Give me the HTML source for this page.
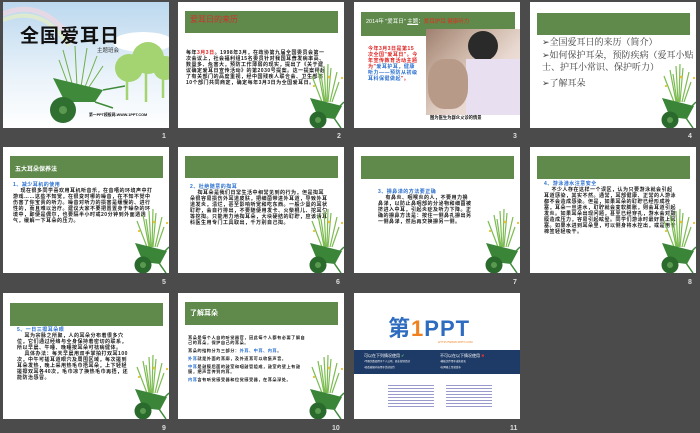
<!DOCTYPE html><html><head><meta charset="utf-8"><style>
*{margin:0;padding:0;box-sizing:border-box}
body{width:700px;height:433px;background:#4b4b4b;position:relative;overflow:hidden;font-family:"Liberation Sans","Noto Sans CJK SC",sans-serif}
.s{position:absolute;width:166px;height:126px;background:#fff;overflow:hidden}
.h{position:absolute;left:7px;top:9px;width:153px;height:23px;background:#5f8a4b}
.n{position:absolute;color:#ddd;font-size:7px;font-weight:bold}
.t{position:absolute;font-size:5px;line-height:6px;color:#1a1a1a;font-weight:bold;letter-spacing:.5px}
.b{color:#2a6fd0}
.wb{position:absolute;right:0;bottom:0}
</style></head><body>
<svg width="0" height="0" style="position:absolute"><defs>
<g id="w"><g stroke="#7cbc52" stroke-width="1.2" fill="none"><path d="M20 40 L14 8 M22 40 L20 4 M24 40 L27 6 M26 40 L33 10 M18 40 L8 14 M28 40 L35 20 M23 40 L24 2 M21 40 L17 12"/></g>
<path d="M6 36 L38 44 L31 57 L14 55 Z" fill="#3a8538"/><circle cx="14" cy="58" r="8.5" fill="#2a6a2c"/><circle cx="14" cy="58" r="3" fill="#5a9a50"/><path d="M30 56 L37 66 M36 44 L40 40" stroke="#3f8a3a" stroke-width="1.5"/><circle cx="25" cy="15" r="1.3" fill="#e8c030"/><circle cx="10" cy="24" r="1.1" fill="#e8c030"/><circle cx="38" cy="16" r="1.1" fill="#e8c030"/></g></defs></svg>

<!-- slide 1 -->
<div class="s" style="left:3px;top:2px;background:linear-gradient(#bcd8ee,#eaf3fa 60%,#fff)">
<svg width="166" height="126" style="position:absolute;left:0;top:0">
<path d="M0 12 Q40 -5 70 40" stroke="#f4d7e0" stroke-width="5" fill="none" opacity=".7"/>
<path d="M0 18 Q40 2 66 44" stroke="#e8f0c0" stroke-width="4" fill="none" opacity=".7"/>
<ellipse cx="140" cy="40" rx="30" ry="10" fill="#fff"/>
<g fill="#a4d472"><circle cx="126" cy="66" r="14"/><circle cx="145" cy="56" r="16"/><circle cx="162" cy="66" r="12"/></g>
<g stroke="#a4d472" stroke-width="2.5"><path d="M124 75V98M143 70V100M160 75V96"/></g>
<g stroke="#6fb04a" stroke-width="1" fill="none"><path d="M70 85 L60 48 M74 85 L72 44 M78 85 L84 46 M82 85 L94 54 M66 85 L56 58 M86 85 L100 64"/></g>
<path d="M50 76 L100 88 L92 100 L62 100 Z" fill="#3f8a3a"/>
<path d="M100 88 L122 84 M92 100 L110 106" stroke="#3f8a3a" stroke-width="1.5"/>
<circle cx="60" cy="108" r="13" fill="#2f7030"/><circle cx="60" cy="108" r="4" fill="#5a9a50"/>
</svg>
<div style="position:absolute;left:17px;top:19px;font-size:19px;font-weight:bold;color:#111;letter-spacing:1px">全国爱耳日</div>
<div style="position:absolute;left:94px;top:44px;font-size:5.5px;color:#333">主题班会</div>
<div style="position:absolute;left:86px;top:111px;font-size:3.8px;color:#111;font-weight:bold">第一PPT模板网-WWW.1PPT.COM</div>
</div>
<div class="n" style="left:162px;top:133px">1</div>

<!-- slide 2 -->
<div class="s" style="left:178px;top:2px">
<div class="h" style="height:22px"></div>
<div style="position:absolute;left:12px;top:12px;font-size:8px;color:#d0302a">爱耳日的来历</div>
<div class="t" style="left:8px;top:48px;width:140px">每年<span style="color:#e02020">3月3日</span>。1998年3月，在政协第九届全国委员会第一次会议上，社会福利组15名委员针对我国耳聋发病率高、数量多、危害大，预防工作薄弱的现实，提出了《关于建议确定爱耳日宣传活动》的第2030号提案。这一提案得起了有关部门的高度重视，经中国残疾人联合会、卫生部等10个部门共同商定，确定每年3月3日为全国爱耳日。</div>
<svg class="wb" width="40" height="66"><use href="#w"/></svg>
</div>
<div class="n" style="left:337px;top:133px">2</div>

<!-- slide 3 -->
<div class="s" style="left:354px;top:2px">
<div class="h" style="left:7px;top:10px;width:154px;height:24px"></div>
<div style="position:absolute;left:12px;top:15px;font-size:5.5px;color:#fff">2014年 "爱耳日" <u>主题</u>：<span style="color:#e03020">爱耳护耳 健康听力</span></div>
<div class="t" style="left:14px;top:44px;width:50px;color:#e02020;line-height:6px">今年3月3日是第15次全国"爱耳日"。今年宣传教育活动主题为"<span class="b">爱耳护耳，健康听力——预防从初级耳科保健做起</span>"。</div>
<div style="position:absolute;left:72px;top:27px;width:95px;height:86px;background:linear-gradient(135deg,#a08070,#c8b0a0 30%,#e8d8d0 60%,#f4eaea)">
<div style="position:absolute;left:42px;top:2px;width:30px;height:30px;border-radius:50%;background:#2a2a2a"></div>
<div style="position:absolute;left:40px;top:30px;width:55px;height:56px;background:#e8e0f0"></div>
<div style="position:absolute;left:2px;top:30px;width:40px;height:50px;border-radius:40%;background:#b89a88"></div></div>
<div style="position:absolute;left:76px;top:113px;font-size:4.3px;font-weight:bold;color:#111">图为医生为群众义诊的情景</div>
</div>
<div class="n" style="left:513px;top:133px">3</div>

<!-- slide 4 -->
<div class="s" style="left:530px;top:2px">
<div class="h" style="top:11px;height:22px"></div>
<div style="position:absolute;left:12px;top:34px;width:154px;font-size:9px;line-height:12.5px;color:#3a3a3a;font-family:'Noto Serif CJK SC',serif">➢全国爱耳日的来历（简介）<br>➢如何保护耳朵，预防疾病（爱耳小贴士、护耳小常识、保护听力）<br><span style="display:block;height:3px"></span>➢了解耳朵</div>
<svg class="wb" width="40" height="66"><use href="#w"/></svg>
</div>
<div class="n" style="left:688px;top:133px">4</div>

<!-- row 2 -->
<div class="s" style="left:3px;top:147px">
<div class="h" style="top:9px;height:22px"></div>
<div style="position:absolute;left:12px;top:17px;font-size:6px;color:#fff;font-weight:bold">五大耳朵保养法</div>
<div class="t" style="left:10px;top:35px;width:140px"><span class="b">1、减少耳机的使用</span><br>&nbsp;&nbsp;&nbsp;&nbsp;现在很多同学喜欢用耳机听音乐，在音嘈的环境声中打游戏……这些不知觉，在很变时哪的噪音，在不知不觉中伤害了你宝贵的听力。噪音对听力的损害是缓慢的、进行性的，而且难以治疗。建议大家不要把置置身于噪杂的环境中，即便是偶尔，也要隔半小时或20分钟到外面透透气，缓解一下耳朵的压力。</div>
<svg class="wb" width="40" height="66"><use href="#w"/></svg>
</div>
<div class="n" style="left:162px;top:279px">5</div>

<div class="s" style="left:178px;top:147px">
<div class="h" style="top:9px;height:22px"></div>
<div class="t" style="left:12px;top:37px;width:138px"><span class="b">2、杜绝随意的掏耳</span><br>&nbsp;&nbsp;&nbsp;&nbsp;掏耳朵是我们日常生活中相常见到的行为，但是掏耳朵很容易损伤外耳道皮肤，把细菌带进外耳道，导致外耳道发炎，溃烂，甚至影响听觉和吃东西。一般少量的耳状耵聍，会自行排出，不要随便用发卡、火柴棍儿、挖耳勺等挖掏。只能用力地掏耳朵，大块硬结的耵聍，应该请耳科医生用专门工具取出，千万别自己掏。</div>
<svg class="wb" width="40" height="66"><use href="#w"/></svg>
</div>
<div class="n" style="left:336px;top:279px">6</div>

<div class="s" style="left:354px;top:147px">
<div class="h" style="top:9px;height:23px"></div>
<div class="t" style="left:24px;top:42px;width:94px"><span class="b">3、擤鼻涕的方法要正确</span><br>&nbsp;&nbsp;&nbsp;&nbsp;有鼻炎、咽喉炎的人，不要用力擤鼻涕，以防止鼻咽部的分泌物和细菌被挤进入中耳，引起炎症及听力下降。正确的擤鼻方法是：按住一侧鼻孔擤出另一侧鼻涕，然后再交换擤另一侧。</div>
<svg class="wb" width="40" height="66"><use href="#w"/></svg>
</div>
<div class="n" style="left:513px;top:279px">7</div>

<div class="s" style="left:530px;top:147px">
<div class="h" style="top:9px;height:23px"></div>
<div class="t" style="left:14px;top:34px;width:132px"><span class="b">4、游泳潜水注意安全</span><br>&nbsp;&nbsp;&nbsp;&nbsp;不少人存在这样一个误区，认为只要游泳就会引起耳道感染，其实不然。通常，耳部健康、正常的人游泳都不会造成感染。但是，如果耳朵的耵聍已经形成栓塞，耳朵一旦进水，耵聍就会变软膨胀，则会耳道引起发炎。如果耳朵出现问题，甚至已经穿孔，游水会对鼓膜造成压力，容易引起眩晕。同学们游泳时最好戴上耳塞。如果水进到耳朵里，可以侧身将水控出，或是用干棉签轻轻吸干。</div>
<svg class="wb" width="40" height="66"><use href="#w"/></svg>
</div>
<div class="n" style="left:688px;top:279px">8</div>

<!-- row 3 -->
<div class="s" style="left:3px;top:293px">
<div class="h" style="top:10px;height:23px"></div>
<div class="t" style="left:14px;top:34px;width:114px"><span class="b">5、一日三擦耳朵眼</span><br>&nbsp;&nbsp;&nbsp;&nbsp;耳为宗脉之所聚，人的耳朵分布着很多穴位，它们通过经络与全身保持着密切的联系，所以早晨、午睡、晚睡按耳朵可祛病健体。<br>&nbsp;&nbsp;&nbsp;&nbsp;具体办法：每天早晨用双手掌拍打双耳100次，中午可搓耳道眼穴及周围区域，每次搓到耳朵发热，晚上采用热毛巾捂耳朵，上下轻轻搓擦双耳各40次，毛巾凉了换热毛巾再捂，还能防治感冒。</div>
<svg class="wb" width="40" height="66"><use href="#w"/></svg>
</div>
<div class="n" style="left:162px;top:425px">9</div>

<div class="s" style="left:178px;top:293px">
<div class="h" style="top:9px;height:23px"></div>
<div style="position:absolute;left:12px;top:15px;font-size:7px;color:#fff;font-weight:bold">了解耳朵</div>
<div class="t" style="left:10px;top:42px;width:120px;font-size:4.2px;line-height:5px">耳朵是每个人自的听觉器官，因此每个人都有必要了解自己的耳朵，保护自己的耳朵。<br><span style="display:block;height:3px"></span>耳朵的结构分为三部分：<span class="b">外耳、中耳、内耳</span>。<br><span style="display:block;height:3px"></span><span class="b">外耳</span>就是外面的耳廓，及外道耳可以收集声音。<br><span style="display:block;height:3px"></span><span class="b">中耳</span>是鼓膜后面的鼓室和咽鼓管组成，鼓室的壁上有鼓膜，把声音传到内耳。<br><span style="display:block;height:3px"></span><span class="b">内耳</span>含有听觉感受器和位觉感受器，在耳朵深处。</div>
<svg class="wb" width="40" height="66"><use href="#w"/></svg>
</div>
<div class="n" style="left:332px;top:425px">10</div>

<div class="s" style="left:354px;top:293px">
<div style="position:absolute;left:34px;top:18px;font-size:22px;font-weight:bold;color:#2e6cc0;letter-spacing:1px">第<span style="color:#f08020">1</span>PPT</div>
<div style="position:absolute;left:84px;top:47px;font-size:3px;color:#f08020">HTTP://WWW.1PPT.COM</div>
<div style="position:absolute;left:0;top:57px;width:166px;height:24px;background:#1e3a66"></div>
<div style="position:absolute;left:10px;top:60px;font-size:4px;color:#fff;line-height:5px">可以在下列情况使用 <span style="color:#6c6">✔</span><br><span style="font-size:2.5px">•不限次数使用于个人公司、商业营销活动<br>•修改编辑内容用于活动宣传</span></div>
<div style="position:absolute;left:86px;top:60px;font-size:4px;color:#fff;line-height:5px">不可以在以下情况使用 <span style="color:#e33">✖</span><br><span style="font-size:2.5px">•模板文件用于出售转卖<br>•在网络上传递发布</span></div>
<div style="position:absolute;left:34px;top:90px;width:46px;height:26px;background:repeating-linear-gradient(#fff 0 2px,#99c 2px 3px)"></div>
<div style="position:absolute;left:92px;top:90px;width:46px;height:26px;background:repeating-linear-gradient(#fff 0 2px,#99c 2px 3px)"></div>
</div>
<div class="n" style="left:510px;top:425px">11</div>
</body></html>
